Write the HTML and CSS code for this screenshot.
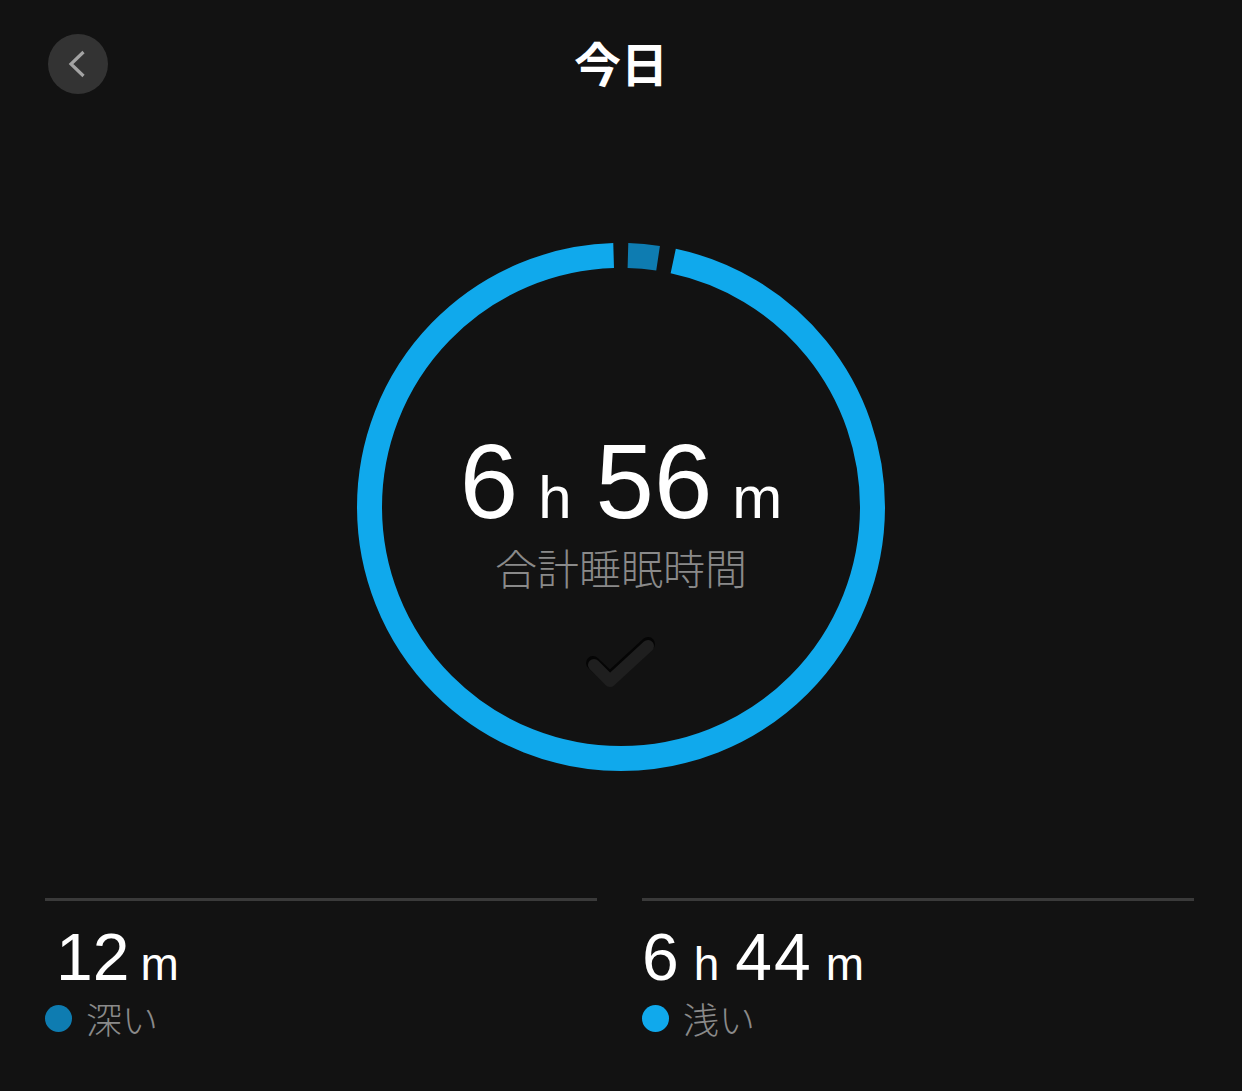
FILE: index.html
```html
<!DOCTYPE html>
<html lang="ja">
<head>
    <meta charset="UTF-8">
    <meta name="viewport" content="width=device-width, initial-scale=1.0">
    <title>今日</title>
    <link rel="stylesheet" href="styles.css">
</head>
<body>

    <div class="screen">
        <header class="topbar">
            <button class="back-btn" aria-label="戻る">
                <svg width="60" height="60" viewBox="0 0 60 60">
                    <polyline points="35.5,18 23,30 35.5,42" fill="none" stroke="#a3a3a3" stroke-width="3.2" stroke-linecap="butt" stroke-linejoin="miter"/>
                </svg>
            </button>
            <h1 class="title">今日</h1>
            <div></div>
        </header>

        <section class="ring-wrap">
            <svg class="ring" width="528" height="528" viewBox="0 0 528 528">
                <g transform="rotate(-90 264 264)">
                    <!-- light sleep -->
                    <circle cx="264" cy="264" r="251.5" pathLength="360" fill="none" stroke="#10a9ec" stroke-width="25" stroke-dasharray="346.3 13.7" stroke-dashoffset="-12"/>
                    <!-- deep sleep -->
                    <circle cx="264" cy="264" r="251.5" pathLength="360" fill="none" stroke="#0e7cb1" stroke-width="25" stroke-dasharray="6.9 353.1" stroke-dashoffset="-1.6"/>
                </g>
            </svg>

            <div class="ring-center">
                <div class="total">
                    <span class="num">6</span><span class="unit">h</span><span class="num">56</span><span class="unit">m</span>
                </div>
                <div class="total-label">合計睡眠時間</div>
                <svg class="check" width="72" height="60" viewBox="0 0 72 60">
                    <polyline points="8,31 25,47 63,12" fill="none" stroke="#050505" stroke-width="14" stroke-linecap="round" stroke-linejoin="round"/>
                    <polyline points="9,33 25,49 63,14" fill="none" stroke="#1f1f1f" stroke-width="12" stroke-linecap="round" stroke-linejoin="round"/>
                </svg>
            </div>
        </section>

        <section class="stats">
            <div class="stat">
                <div class="stat-value indent">
                    <span class="num">12</span><span class="unit">m</span>
                </div>
                <div class="stat-label">
                    <span class="dot deep"></span>深い
                </div>
            </div>
            <div class="stat">
                <div class="stat-value">
                    <span class="num">6</span><span class="unit">h</span><span class="num">44</span><span class="unit">m</span>
                </div>
                <div class="stat-label">
                    <span class="dot light"></span>浅い
                </div>
            </div>
        </section>
    </div>

</body>
</html>
```

FILE: styles.css
```css
body {
    margin: 0;
    background-color: #121212;
    font-family: "Liberation Sans", "Noto Sans CJK JP", sans-serif;
    color: #ffffff;
}
.screen {
    width: 1242px;
    height: 1091px;
    overflow: hidden;
    background-color: #121212;
}
.topbar {
    display: grid;
    grid-template-columns: 60px 1fr 60px;
    align-items: center;
    padding: 34px 48px 0;
}
.back-btn {
    width: 60px;
    height: 60px;
    padding: 0;
    border: none;
    border-radius: 50%;
    background-color: #333333;
    display: flex;
    align-items: center;
    justify-content: center;
    cursor: pointer;
}
.title {
    margin: 0;
    text-align: center;
    font-family: "Noto Sans CJK JP", sans-serif;
    font-size: 47px;
    font-weight: 700;
    line-height: 60px;
    position: relative;
    top: -2px;
}
.ring-wrap {
    position: relative;
    width: 528px;
    height: 528px;
    margin: 149px auto 0;
}
.ring {
    display: block;
}
.ring-center {
    position: absolute;
    top: 186px;
    left: 0;
    right: 0;
    display: flex;
    flex-direction: column;
    align-items: center;
}
.total {
    font-size: 105px;
    line-height: 105px;
    white-space: nowrap;
}
.total .unit {
    font-size: 60px;
    margin: 0 24px 0 20px;
}
.total .unit:last-child {
    margin-right: 0;
}
.total-label {
    margin-top: -8px;
    font-family: "Noto Sans CJK JP", sans-serif;
    font-size: 42px;
    font-weight: 300;
    line-height: 50px;
    color: #8a8a8a;
}
.check {
    display: block;
    margin-top: 40px;
}
.stats {
    display: grid;
    grid-template-columns: 1fr 1fr;
    gap: 45px;
    padding: 0 48px 0 45px;
    margin-top: 127px;
}
.stat {
    border-top: 3px solid #3a3a3a;
    padding-top: 23px;
}
.stat-value {
    font-size: 66px;
    line-height: 66px;
    white-space: nowrap;
}
.stat-value .num {
    letter-spacing: 2px;
}
.stat-value .unit {
    font-size: 46px;
    margin: 0 16px 0 13px;
}
.stat-value .unit:last-child {
    margin-right: 0;
}
.stat-value.indent {
    padding-left: 11px;
}
.stat-value.indent .num {
    letter-spacing: 0;
}
.stat-value.indent .unit {
    margin-left: 11px;
}
.stat-label {
    margin-top: -1px;
    display: flex;
    align-items: center;
    font-family: "Noto Sans CJK JP", sans-serif;
    font-size: 36px;
    font-weight: 300;
    line-height: 44px;
    color: #8a8a8a;
}
.dot {
    width: 27px;
    height: 27px;
    border-radius: 50%;
    margin-right: 14px;
}
.dot.deep {
    background-color: #0e7cb1;
}
.dot.light {
    background-color: #10a9ec;
}
```
